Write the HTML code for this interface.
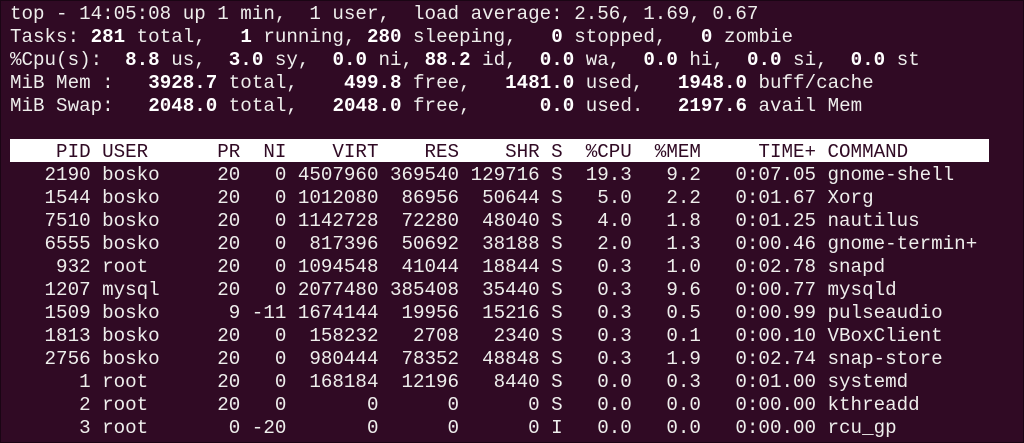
<!DOCTYPE html>
<html><head><meta charset="utf-8"><style>
html,body{margin:0;padding:0;}
body{width:1024px;height:443px;background:#300a24;overflow:hidden;position:relative;box-sizing:border-box;border:1px solid #1a0514;}
.t{position:absolute;left:9px;top:0;font-family:"Liberation Mono","DejaVu Sans Mono",monospace;font-size:19.2px;color:#eeeeec;}
.l{height:23px;line-height:23px;white-space:pre;}
.l span.i{position:relative;top:2px;}
b{font-weight:bold;color:#ffffff;}
.h{background:#ffffff;color:#300a24;width:979px;}
</style></head><body>
<div class="t">
<div class="l"><span class="i">top - 14:05:08 up 1 min,  1 user,  load average: 2.56, 1.69, 0.67</span></div>
<div class="l"><span class="i">Tasks: <b>281</b> total,   <b>1</b> running, <b>280</b> sleeping,   <b>0</b> stopped,   <b>0</b> zombie</span></div>
<div class="l"><span class="i">%Cpu(s):  <b>8.8</b> us,  <b>3.0</b> sy,  <b>0.0</b> ni, <b>88.2</b> id,  <b>0.0</b> wa,  <b>0.0</b> hi,  <b>0.0</b> si,  <b>0.0</b> st</span></div>
<div class="l"><span class="i">MiB Mem :   <b>3928.7</b> total,    <b>499.8</b> free,   <b>1481.0</b> used,   <b>1948.0</b> buff/cache</span></div>
<div class="l"><span class="i">MiB Swap:   <b>2048.0</b> total,   <b>2048.0</b> free,      <b>0.0</b> used.   <b>2197.6</b> avail Mem</span></div>
<div class="l"> </div>
<div class="l h"><span class="i">    PID USER      PR  NI    VIRT    RES    SHR S  %CPU  %MEM     TIME+ COMMAND</span></div>
<div class="l"><span class="i">   2190 bosko     20   0 4507960 369540 129716 S  19.3   9.2   0:07.05 gnome-shell</span></div>
<div class="l"><span class="i">   1544 bosko     20   0 1012080  86956  50644 S   5.0   2.2   0:01.67 Xorg</span></div>
<div class="l"><span class="i">   7510 bosko     20   0 1142728  72280  48040 S   4.0   1.8   0:01.25 nautilus</span></div>
<div class="l"><span class="i">   6555 bosko     20   0  817396  50692  38188 S   2.0   1.3   0:00.46 gnome-termin+</span></div>
<div class="l"><span class="i">    932 root      20   0 1094548  41044  18844 S   0.3   1.0   0:02.78 snapd</span></div>
<div class="l"><span class="i">   1207 mysql     20   0 2077480 385408  35440 S   0.3   9.6   0:00.77 mysqld</span></div>
<div class="l"><span class="i">   1509 bosko      9 -11 1674144  19956  15216 S   0.3   0.5   0:00.99 pulseaudio</span></div>
<div class="l"><span class="i">   1813 bosko     20   0  158232   2708   2340 S   0.3   0.1   0:00.10 VBoxClient</span></div>
<div class="l"><span class="i">   2756 bosko     20   0  980444  78352  48848 S   0.3   1.9   0:02.74 snap-store</span></div>
<div class="l"><span class="i">      1 root      20   0  168184  12196   8440 S   0.0   0.3   0:01.00 systemd</span></div>
<div class="l"><span class="i">      2 root      20   0       0      0      0 S   0.0   0.0   0:00.00 kthreadd</span></div>
<div class="l"><span class="i">      3 root       0 -20       0      0      0 I   0.0   0.0   0:00.00 rcu_gp</span></div>
</div>
</body></html>
